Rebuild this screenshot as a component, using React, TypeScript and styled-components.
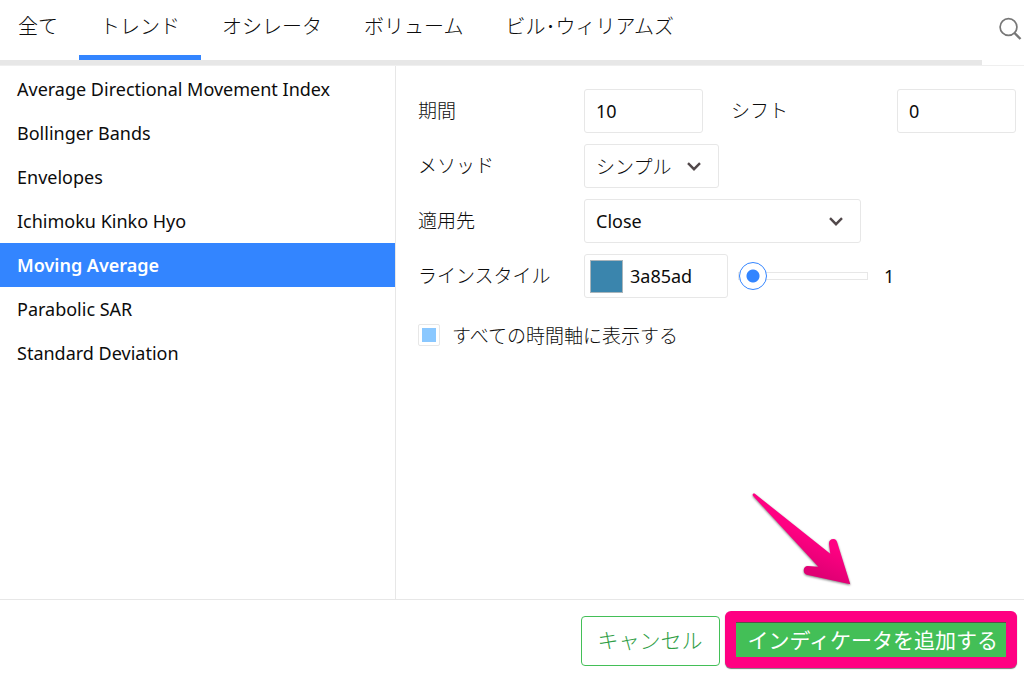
import React, { useState } from "react";
import styled, { createGlobalStyle, css } from "styled-components";

const blue = "#3385ff";
const line = "#e7e7e7";
const green = "#43bf57";
const pink = "#ff0082";

const GlobalStyle = createGlobalStyle`
  *, *::before, *::after { box-sizing: border-box; }
  body { margin: 0; background: #fff; }
  body, button, input, select {
    font-family: "Noto Sans", "Noto Sans CJK JP", sans-serif;
    font-size: 18px;
    line-height: 24px;
    color: #0c0c0c;
  }
`;

const Dialog = styled.div`
  display: grid;
  grid-template-rows: auto 1fr auto;
  min-height: 100vh;
`;

const Header = styled.header`
  display: flex;
  border-bottom: 1px solid #efefef;
`;

const Tabs = styled.nav`
  flex: 1;
  display: flex;
  border-bottom: 5px solid ${line};
`;

const Tab = styled.button<{ $active?: boolean }>`
  height: 60px;
  padding: 0 21px 3px;
  border: 0;
  border-bottom: 5px solid ${(p) => (p.$active ? blue : "transparent")};
  background: none;
  font-family: "Noto Sans CJK JP", sans-serif;
  font-weight: 300;
  font-size: 20px;
  white-space: nowrap;
  &:first-child { padding-left: 18px; }
`;

const SearchButton = styled.button`
  width: 42px;
  padding: 0 2px 8px 0;
  border: 0;
  background: none;
  display: flex;
  align-items: center;
  justify-content: flex-end;
`;

const Main = styled.main`
  display: grid;
  grid-template-columns: minmax(240px, 395px) minmax(0, 1fr);
`;

const IndicatorList = styled.ul`
  margin: 0;
  padding: 1px 0 0;
  list-style: none;
`;

const IndicatorButton = styled.button<{ $active: boolean }>`
  display: block;
  width: 100%;
  height: 44px;
  padding: 0 17px;
  border: 0;
  background: none;
  text-align: left;
  ${(p) => p.$active && css`
    background: ${blue};
    color: #fff;
    font-weight: 600;
  `}
`;

const Settings = styled.form`
  display: flex;
  flex-direction: column;
  gap: 11px;
  padding: 23px 8px 23px 22px;
  border-left: 1px solid ${line};
`;

const Row = styled.div`
  display: flex;
  align-items: center;
  height: 44px;
`;

const Label = styled.label`
  flex: 0 0 166px;
  padding-bottom: 2px;
  font-family: "Noto Sans CJK JP", sans-serif;
  font-weight: 300;
  font-size: 19px;
`;

const field = css`
  height: 44px;
  padding: 0 11px;
  border: 1px solid ${line};
  border-radius: 3px;
  background: #fff;
`;

const NumberField = styled.input`
  ${field}
  flex: 0 1 119px;
  min-width: 0;
  & + label { margin-left: 28px; }
`;

const SelectWrap = styled.div<{ $width: number }>`
  position: relative;
  flex: 0 1 ${(p) => p.$width}px;
  svg {
    position: absolute;
    right: 17px;
    top: 14px;
    pointer-events: none;
  }
`;

const Select = styled.select`
  ${field}
  width: 100%;
  appearance: none;
  font-weight: 400;
  &:lang(ja) {
    font-family: "Noto Sans CJK JP", sans-serif;
    font-weight: 300;
    font-size: 19px;
  }
`;

const ColorField = styled.div`
  ${field}
  display: flex;
  align-items: center;
  gap: 7px;
  flex: 0 1 144px;
  padding: 0 5px;
`;

const Swatch = styled.input`
  flex: 0 0 33px;
  height: 33px;
  padding: 0;
  border: 1px solid #a9b5bb;
  background: none;
  &::-webkit-color-swatch-wrapper { padding: 0; }
  &::-webkit-color-swatch { border: 0; }
`;

const ColorCode = styled.input`
  min-width: 0;
  width: 100%;
  padding: 0;
  border: 0;
`;

const Slider = styled.input`
  appearance: none;
  flex: 0 1 130px;
  min-width: 0;
  height: 28px;
  margin: 0 16px 0 10px;
  background: none;
  &::-webkit-slider-runnable-track {
    height: 8px;
    border: 1px solid ${line};
  }
  &::-webkit-slider-thumb {
    appearance: none;
    width: 28px;
    height: 28px;
    margin-top: -11px;
    border: 1px solid ${blue};
    border-radius: 50%;
    background: radial-gradient(circle, ${blue} 6px, #fff 7px);
  }
`;

const CheckLabel = styled.label`
  display: flex;
  align-items: center;
  gap: 12px;
  height: 52px;
  font-family: "Noto Sans CJK JP", sans-serif;
  font-weight: 300;
  font-size: 19px;
`;

const Checkbox = styled.input`
  appearance: none;
  width: 22px;
  height: 22px;
  margin: 0;
  padding: 3px;
  border: 1px solid ${line};
  border-radius: 2px;
  &:checked {
    background: #8ac8ff content-box;
  }
`;

const Footer = styled.footer`
  display: flex;
  justify-content: flex-end;
  align-items: flex-end;
  gap: 5px;
  padding: 11px 7px 7px;
  border-top: 1px solid ${line};
`;

const ActionButton = styled.button`
  font-family: "Noto Sans CJK JP", sans-serif;
  font-weight: 400;
  font-size: 21px;
  white-space: nowrap;
`;

const CancelButton = styled(ActionButton)`
  height: 50px;
  margin-bottom: 2px;
  padding: 0 17px 4px 15px;
  border: 1px solid ${green};
  border-radius: 4px;
  background: #fff;
  color: #2f9e45;
  font-weight: 300;
`;

const Highlight = styled.div`
  position: relative;
  padding: 11px;
  border-radius: 6px;
  background: ${pink};
  box-shadow: 0 1px 1px #777;
`;

const AddButton = styled(ActionButton)`
  display: block;
  height: 35px;
  padding: 0 8px 3px 11px;
  border: 0;
  border-top: 1px solid #5a5048;
  background: ${green};
  color: #fff;
`;

const Arrow = styled.svg`
  position: absolute;
  right: 163px;
  bottom: calc(100% + 22px);
  filter: drop-shadow(0 1px 1px rgba(0, 0, 0, 0.5));
`;

const Chevron = () => (
  <svg width="16" height="16" viewBox="0 0 16 16" fill="none" stroke="#51484a" strokeWidth="2.4" aria-hidden="true">
    <path d="M2 5.2 8 11.2 14 5.2" />
  </svg>
);

const tabs = ["全て", "トレンド", "オシレータ", "ボリューム", "ビル･ウィリアムズ"];
const indicators = [
  "Average Directional Movement Index",
  "Bollinger Bands",
  "Envelopes",
  "Ichimoku Kinko Hyo",
  "Moving Average",
  "Parabolic SAR",
  "Standard Deviation",
];

export default function App() {
  const [tab, setTab] = useState("トレンド");
  const [indicator, setIndicator] = useState("Moving Average");
  const [width, setWidth] = useState(1);

  return (
    <Dialog lang="ja">
      <GlobalStyle />
      <Header>
        <Tabs>
          {tabs.map((name) => (
            <Tab key={name} type="button" $active={name === tab} onClick={() => setTab(name)}>
              {name}
            </Tab>
          ))}
        </Tabs>
        <SearchButton type="button" aria-label="検索">
          <svg width="24" height="24" viewBox="0 0 24 24" fill="none" stroke="#777" aria-hidden="true">
            <circle cx="10.5" cy="10" r="8.4" strokeWidth="1.7" />
            <path d="m16.5 16 6 6" strokeWidth="2.4" />
          </svg>
        </SearchButton>
      </Header>
      <Main>
        <IndicatorList lang="en">
          {indicators.map((name) => (
            <li key={name}>
              <IndicatorButton type="button" $active={name === indicator} onClick={() => setIndicator(name)}>
                {name}
              </IndicatorButton>
            </li>
          ))}
        </IndicatorList>
        <Settings>
          <Row>
            <Label htmlFor="period">期間</Label>
            <NumberField id="period" defaultValue="10" />
            <Label htmlFor="shift">シフト</Label>
            <NumberField id="shift" defaultValue="0" />
          </Row>
          <Row>
            <Label htmlFor="method">メソッド</Label>
            <SelectWrap $width={135}>
              <Select id="method">
                <option>シンプル</option>
              </Select>
              <Chevron />
            </SelectWrap>
          </Row>
          <Row>
            <Label htmlFor="apply">適用先</Label>
            <SelectWrap $width={277}>
              <Select id="apply" lang="en">
                <option>Close</option>
              </Select>
              <Chevron />
            </SelectWrap>
          </Row>
          <Row>
            <Label htmlFor="color">ラインスタイル</Label>
            <ColorField>
              <Swatch type="color" defaultValue="#3a85ad" aria-label="色" />
              <ColorCode id="color" defaultValue="3a85ad" />
            </ColorField>
            <Slider
              id="width"
              type="range"
              min={1}
              max={5}
              value={width}
              aria-label="線の太さ"
              onChange={(e) => setWidth(Number(e.target.value))}
            />
            <output htmlFor="width">{width}</output>
          </Row>
          <CheckLabel>
            <Checkbox type="checkbox" defaultChecked />
            すべての時間軸に表示する
          </CheckLabel>
        </Settings>
      </Main>
      <Footer>
        <CancelButton type="button">キャンセル</CancelButton>
        <Highlight>
          <AddButton type="button">インディケータを追加する</AddButton>
          <Arrow width="104" height="98" viewBox="0 0 104 98" aria-hidden="true">
            <defs>
              <linearGradient id="arrowFill" x1="0.75" y1="0.55" x2="0.6" y2="0.85">
                <stop offset="0" stopColor={pink} />
                <stop offset="1" stopColor="#e00074" />
              </linearGradient>
            </defs>
            <path
              fill="url(#arrowFill)"
              d="M5.2 3 80.3 62.7 79 53.3C78.6 50 80.6 48 83.3 48 85.6 48 86.8 49.6 87.3 51.7L100.3 93.3 56.7 83.7C54.6 83 53.7 81.4 53.7 79.3 53.8 76.8 55.2 75 57.8 75L68.3 75.7 2.9 4.8C2 3 3.8 1.8 5.2 3Z"
            />
          </Arrow>
        </Highlight>
      </Footer>
    </Dialog>
  );
}
